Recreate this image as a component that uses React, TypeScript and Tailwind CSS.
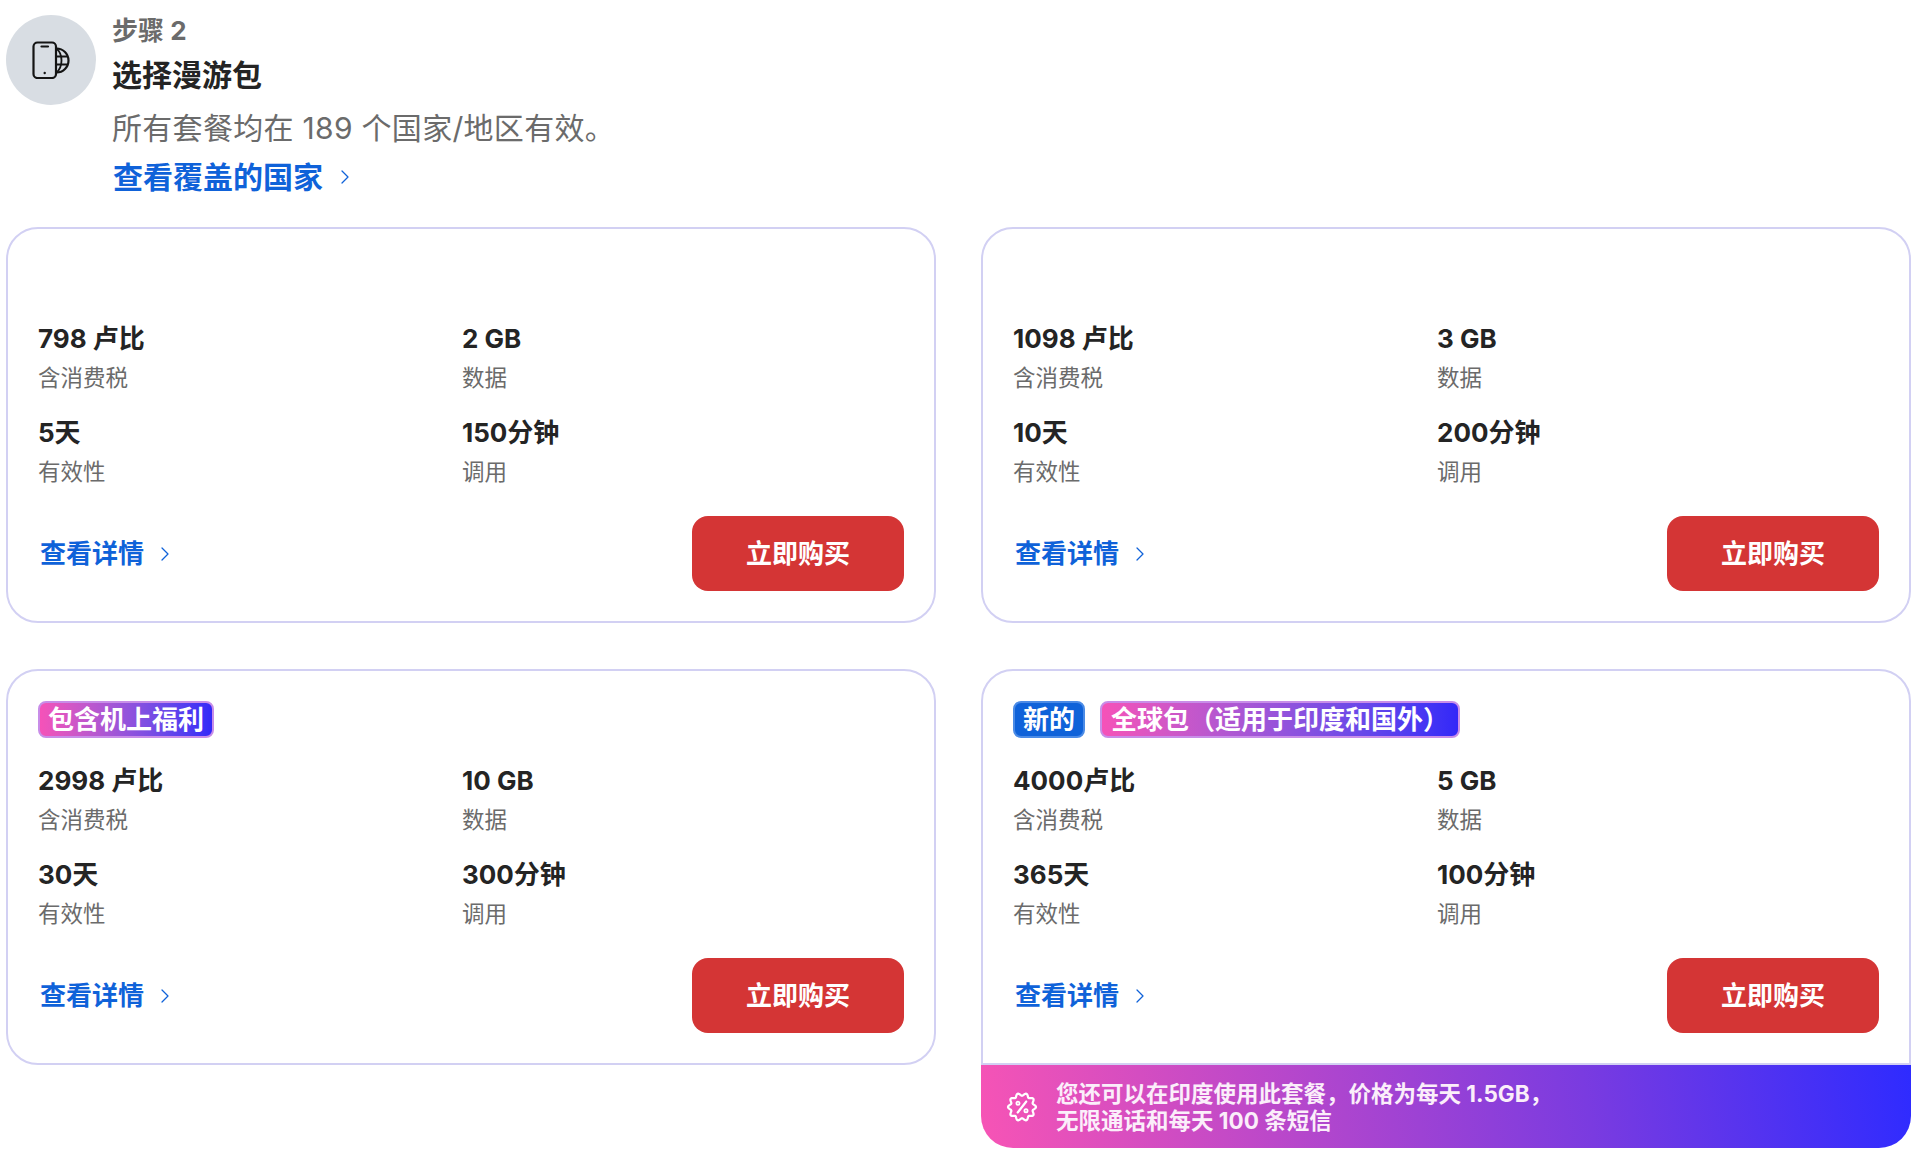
import { ChevronRight } from "lucide-react";

function PhoneGlobe() {
  return (
    <svg width="38" height="38" viewBox="0 0 38 38" fill="none" stroke="#141414" strokeWidth="2.2">
      <rect x="1.5" y="1.5" width="22.5" height="35.5" rx="4" />
      <path d="M9.5 5.5h6.5" strokeLinecap="round" strokeWidth="2.2" />
      <circle cx="12.7" cy="32" r="1.2" fill="#141414" stroke="none" />
      <path d="M24.5 7.5a12 12 0 0 1 0 24" strokeWidth="2.2" />
      <path d="M24.5 7.5c3.4 3 5 7 5 12s-1.6 9-5 12" strokeWidth="1.8" />
      <path d="M24.5 15.5h11M24.5 23.5h11" strokeWidth="1.8" />
    </svg>
  );
}

function scallopPath() {
  const pts: string[] = [];
  const n = 144;
  for (let i = 0; i < n; i++) {
    const t = (i / n) * Math.PI * 2;
    const r = 12.6 + 1.4 * Math.cos(10 * t);
    const x = 16 + r * Math.cos(t);
    const y = 16 + r * Math.sin(t);
    pts.push(`${i ? "L" : "M"}${x.toFixed(2)} ${y.toFixed(2)}`);
  }
  return pts.join("") + "Z";
}

function OfferIcon() {
  return (
    <svg width="32" height="32" viewBox="0 0 32 32" fill="none" stroke="#fff" strokeWidth="2.2" strokeLinecap="round" strokeLinejoin="round">
      <path d={scallopPath()} />
      <path d="M20.3 10.5L11.7 21.5" />
      <circle cx="12" cy="12.3" r="1.6" strokeWidth="1.8" />
      <circle cx="20" cy="19.7" r="1.6" strokeWidth="1.8" />
    </svg>
  );
}

function Stat({ value, label }: { value: string; label: string }) {
  return (
    <div>
      <div className="text-[26px] leading-[36px] font-bold text-[#242424]">{value}</div>
      <div className="mt-[6px] text-[22.5px] leading-[30px] text-[#6b6b6b]">{label}</div>
    </div>
  );
}

function Card({
  price, data, days, mins, badges, banner,
}: {
  price: string; data: string; days: string; mins: string;
  badges?: React.ReactNode; banner?: boolean;
}) {
  return (
    <div className="flex flex-col">
      <div className={`border-2 border-[#d2d0f3] bg-white pt-[30px] px-[30px] pb-[30px] ${banner ? "rounded-t-[32px]" : "rounded-[32px]"}`}>
        <div className="flex h-[37px] gap-[15px]">{badges}</div>
        <div className="mt-[25px] grid grid-cols-[424px_1fr] gap-y-[22px]">
          <Stat value={price} label="含消费税" />
          <Stat value={data} label="数据" />
          <Stat value={days} label="有效性" />
          <Stat value={mins} label="调用" />
        </div>
        <div className="mt-[29px] flex items-center justify-between">
          <a className="ml-[2px] flex items-center text-[26px] font-bold text-[#0f62d9]">
            查看详情
            <ChevronRight className="ml-[9px] h-[24px] w-[24px]" strokeWidth={1.25} />
          </a>
          <button className="flex h-[75px] w-[212px] items-center justify-center rounded-[16px] bg-[#d43535] text-[26px] font-bold text-white">
            立即购买
          </button>
        </div>
      </div>
      {banner && (
        <div className="flex h-[83px] items-center rounded-b-[32px] bg-[linear-gradient(80deg,#f754b5_0%,#7a3be0_65%,#2e2bff_100%)] pl-[25px]">
          <OfferIcon />
          <div className="ml-[18px] text-[22.5px] leading-[27px] font-bold text-[#fbeefa]">
            您还可以在印度使用此套餐，价格为每天 1.5GB，
            <br />
            无限通话和每天 100 条短信
          </div>
        </div>
      )}
    </div>
  );
}

function Badge({ children, blue, wide }: { children: React.ReactNode; blue?: boolean; wide?: boolean }) {
  return (
    <span className={`flex h-[37px] items-center rounded-[8px] border-2 text-[26px] font-semibold text-white ${wide ? "px-[9px]" : "px-[8px]"} ${blue ? "border-[#4b8be6] bg-[#0f62d9]" : "border-[#c88de8] bg-gradient-to-r from-[#f552b8] to-[#3327f8]"}`}>
      {children}
    </span>
  );
}

export default function App() {
  return (
    <div
      className="min-h-[1158px] bg-white pl-[6px] pr-[9px] pt-[13px]"
      style={{ fontFamily: 'Inter, "Noto Sans CJK SC", sans-serif' }}
    >
      <div className="flex gap-[16px]">
        <div className="mt-[2px] flex h-[90px] w-[90px] items-center justify-center rounded-full bg-[#d8dde3]">
          <PhoneGlobe />
        </div>
        <div>
          <div className="text-[26px] leading-[36px] font-bold text-[#6b6b6b]">步骤 2</div>
          <div className="mt-[7px] text-[30px] leading-[38px] font-bold text-[#242424]">选择漫游包</div>
          <div className="mt-[14px] text-[30px] leading-[40px] tracking-[0.3px] text-[#6b6b6b]">所有套餐均在 189 个国家/地区有效。</div>
          <a className="mt-[9px] flex items-center text-[30px] leading-[40px] font-bold text-[#0f62d9]">
            <span className="ml-[1px]">查看覆盖的国家</span>
            <ChevronRight className="ml-[10px] h-[24px] w-[24px]" strokeWidth={1.25} />
          </a>
        </div>
      </div>
      <div className="mt-[30px] grid grid-cols-[930px_930px] items-start gap-x-[45px] gap-y-[46px]">
        <Card price="798 卢比" data="2 GB" days="5天" mins="150分钟" />
        <Card price="1098 卢比" data="3 GB" days="10天" mins="200分钟" />
        <Card price="2998 卢比" data="10 GB" days="30天" mins="300分钟" badges={<Badge>包含机上福利</Badge>} />
        <Card
          price="4000卢比" data="5 GB" days="365天" mins="100分钟" banner
          badges={<><Badge blue>新的</Badge><Badge wide>全球包（适用于印度和国外）</Badge></>}
        />
      </div>
    </div>
  );
}
